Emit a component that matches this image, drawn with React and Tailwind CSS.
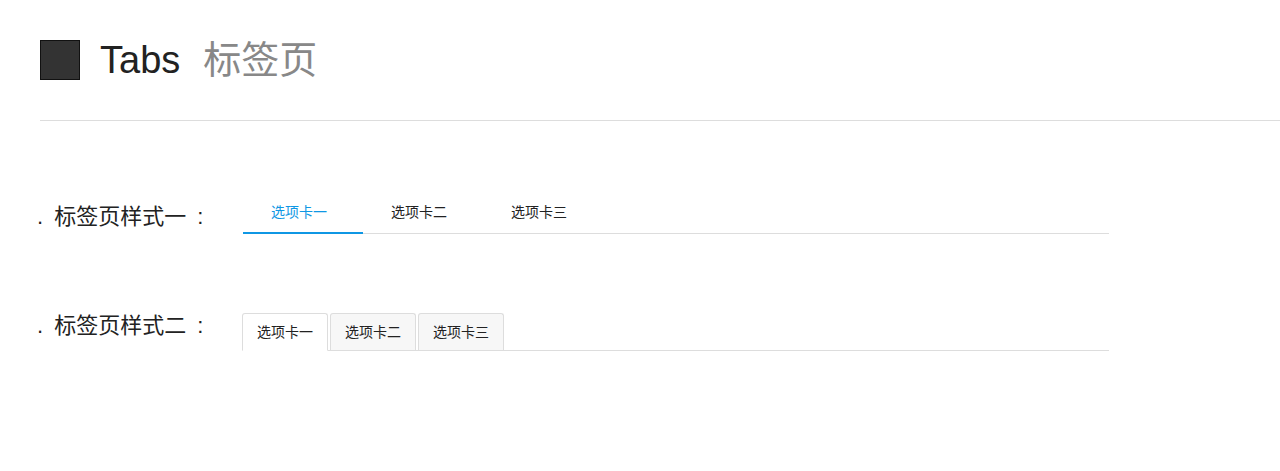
const cjk = { fontFamily: '"Liberation Sans", "Noto Sans CJK SC", sans-serif' };

function LineTabs() {
  const tabs = ['选项卡一', '选项卡二', '选项卡三'];
  return (
    <ul className="flex w-[866px] border-b border-[#dddddd]">
      {tabs.map((t, i) => (
        <li
          key={t}
          className={
            i === 0
              ? 'w-[120px] h-[40px] -mb-px pr-[8px] text-center text-[14px] leading-[36px] text-[#0f97e4] border-b-2 border-[#0f97e4]'
              : 'w-[120px] h-[40px] -mb-px pr-[8px] text-center text-[14px] leading-[36px] text-[#222]'
          }
        >
          {t}
        </li>
      ))}
    </ul>
  );
}

function CardTabs() {
  const tabs = ['选项卡一', '选项卡二', '选项卡三'];
  return (
    <ul className="flex gap-[2px] w-[867px] border-b border-[#dddddd]">
      {tabs.map((t, i) => (
        <li
          key={t}
          className={
            i === 0
              ? 'w-[86px] h-[38px] -mb-px text-center text-[14px] leading-[36px] text-[#222] bg-white border border-[#dddddd] border-b-white rounded-t-[3px]'
              : 'w-[86px] h-[37px] text-center text-[14px] leading-[36px] text-[#222] bg-[#f7f7f7] border border-b-0 border-[#dddddd] rounded-t-[3px]'
          }
        >
          {t}
        </li>
      ))}
    </ul>
  );
}

function Label({ children }) {
  return (
    <span className="text-[22px] leading-[28px] text-[#222]">
      <span className="mr-[11px]">.</span>
      {children}
      <span className="ml-[11px]">:</span>
    </span>
  );
}

export default function App() {
  return (
    <div className="min-h-[471px] bg-white pl-10 pt-10" style={cjk}>
      <div className="flex items-center h-10">
        <div className="w-10 h-10 bg-[#333333] border border-[#111]" />
        <h1 className="ml-5 text-[38px] leading-10 text-[#222]">
          Tabs<span className="ml-[23px] text-[#888]">标签页</span>
        </h1>
      </div>
      <div className="mt-10 border-t border-[#dddddd]" />

      <div className="flex items-start mt-[73px]">
        <div className="w-[206px] shrink-0 -ml-[3px] mt-[9px]">
          <Label>标签页样式一</Label>
        </div>
        <LineTabs />
      </div>

      <div className="flex items-start mt-[79px]">
        <div className="w-[205px] shrink-0 -ml-[3px] -mt-px">
          <Label>标签页样式二</Label>
        </div>
        <CardTabs />
      </div>
    </div>
  );
}
